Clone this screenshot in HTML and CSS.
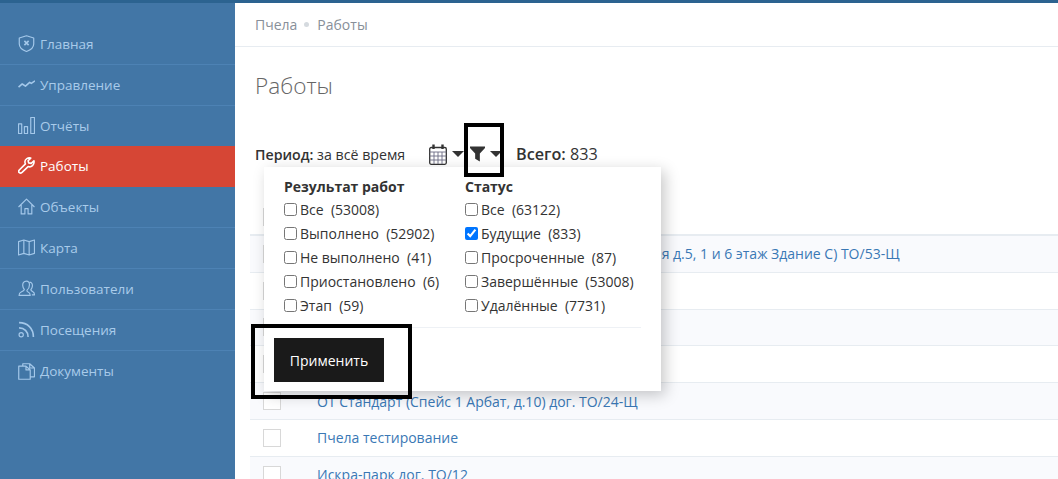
FILE: index.html
```html
<!DOCTYPE html>
<html lang="ru">
<head>
<meta charset="utf-8">
<title>Работы</title>
<link rel="stylesheet" href="styles.css">
</head>
<body>
<div class="topbar"></div>
<div class="app">
  <aside class="sidebar">
    <nav class="nav">
      <a class="nav-item"><svg class="nav-icon" viewBox="0 0 16 16"><path d="M8 .7 14.800 2.800V8.500C14.800 11.700 11.700 14.200 8 15.500 4.300 14.200 1.200 11.700 1.200 8.500V2.800Z"/><path class="thick" d="M6 5.500 10 9.500M10 5.500 6 9.500"/></svg><span>Главная</span></a>
      <a class="nav-item"><svg class="nav-icon" viewBox="0 0 16 16"><path class="thick" d="M.5 10.500 4 7.500 7 9.500 11 6 12.500 7 16 4.500"/></svg><span>Управление</span></a>
      <a class="nav-item"><svg class="nav-icon" viewBox="0 0 16 16"><path d="M.5 6.500H3.500V15.500H.5ZM6 9H9V15.500H6ZM12 .5H15.500V15.500H12Z"/></svg><span>Отчёты</span></a>
      <a class="nav-item active"><svg class="nav-icon" viewBox="0 0 16 16"><path class="thick" d="M15 3.500 12.500 6 10 5.500 9.500 3.500 12 1C9.500.3 6.500 1.800 6.500 4.500 6.500 5.300 6.700 6 7 6.500L1.200 12.200C.3 13.200.6 14.300 1.300 14.800 2.100 15.400 3 15.200 3.800 14.500L9.500 9C12.500 10 15.800 7.500 15 3.500Z"/></svg><span>Работы</span></a>
      <a class="nav-item"><svg class="nav-icon" viewBox="0 0 16 16"><path d="M.5 8.500 8 1 15.500 8.500M3 6.500V15H6.500V10H9.500V15H13V6.500"/></svg><span>Объекты</span></a>
      <a class="nav-item"><svg class="nav-icon" viewBox="0 0 16 16"><path d="M.5 2.500 5.500 1 10.500 2.500 15.500 1V13.500L10.500 15 5.500 13.500.5 15ZM5.500 1V13.500M10.500 2.500V15"/></svg><span>Карта</span></a>
      <a class="nav-item"><svg class="nav-icon" viewBox="0 0 16 16"><path d="M8 1C5.500 1 4.200 3 4.500 5.500 4.700 7.300 5.500 8.300 6 9 6 10 5 10.500 3 11.300 1.500 11.900 1 12.800 1 14.500H11.500C11.500 12.800 11 11.900 9.500 11.300 8 10.700 8.500 10 8.500 9.500 9.800 8.500 10.800 6.500 10.800 4.500 10.800 2.500 9.800 1 8 1ZM11 2C13 2.200 13.800 4 13.500 6 13.300 7.500 12.500 8.500 12 9.200 12.300 10 13 10.500 14 11 15 11.500 15.500 12.500 15.500 14H13"/></svg><span>Пользователи</span></a>
      <a class="nav-item"><svg class="nav-icon" viewBox="0 0 16 16"><circle cx="3" cy="13" r="2"/><path class="thick" d="M1 6.500C6 6.500 9.500 10 9.500 15M1 1.500C9 1.500 14.500 7 14.500 15"/></svg><span>Посещения</span></a>
      <a class="nav-item"><svg class="nav-icon" viewBox="0 0 16 16"><path d="M4.500 3V.7H11L15.500 4.700V13H11.500M.7 3H7.500L11.500 6.500V15.300H.7ZM7.500 3V6.500H11.500M11 .7V4.700H15.500"/></svg><span>Документы</span></a>
    </nav>
  </aside>
  <main class="content">
    <div class="crumbs"><span>Пчела</span><i class="crumb-dot"></i><span>Работы</span></div>
    <h1 class="title">Работы</h1>
    <div class="toolbar">
      <span class="period"><b>Период:</b> за всё время</span>
      <span class="tool tool-cal"><svg class="cal" viewBox="0 0 18 21"><rect x=".7" y="3.500" width="16.600" height="16.800" rx="1.500" class="cal-frame"/><path d="M.7 8H17.300M.7 12H17.300M.7 16H17.300M5 8V20M9 8V20M13 8V20" class="cal-grid"/><path d="M4.500 .5V5M13.500 .5V5" class="cal-pin"/></svg><i class="caret"></i></span>
      <span class="tool tool-filter"><svg class="funnel" viewBox="0 0 16 16"><path d="M0 0H16V1.500L10.500 7.500V16L5.500 13V7.500L0 1.500Z"/></svg><i class="caret"></i></span>
      <span class="total"><b>Всего:</b> 833</span>
    </div>
    <div class="table-head"><span class="box"></span></div>
    <ul class="rows">
      <li class="row alt"><span class="box"></span><a>Пчела (Дом, город Москва, улица Большая Садовая д.5, 1 и 6 этаж Здание С) ТО/53-Щ</a></li>
      <li class="row"><span class="box"></span></li>
      <li class="row alt"><span class="box"></span></li>
      <li class="row"><span class="box"></span></li>
      <li class="row alt"><span class="box"></span><a>ОТ Стандарт (Спейс 1 Арбат, д.10) дог. ТО/24-Щ</a></li>
      <li class="row"><span class="box"></span><a>Пчела тестирование</a></li>
      <li class="row alt"><span class="box"></span><a>Искра-парк дог. ТО/12</a></li>
    </ul>
  </main>
</div>

<div class="popup">
  <div class="popup-cols">
    <div class="popup-col col-a">
      <h4>Результат работ</h4>
      <label class="opt"><input type="checkbox"><span>Все&nbsp; (53008)</span></label>
      <label class="opt"><input type="checkbox"><span>Выполнено&nbsp; (52902)</span></label>
      <label class="opt"><input type="checkbox"><span>Не выполнено&nbsp; (41)</span></label>
      <label class="opt"><input type="checkbox"><span>Приостановлено&nbsp; (6)</span></label>
      <label class="opt"><input type="checkbox"><span>Этап&nbsp; (59)</span></label>
    </div>
    <div class="popup-col">
      <h4>Статус</h4>
      <label class="opt"><input type="checkbox"><span>Все&nbsp; (63122)</span></label>
      <label class="opt"><input type="checkbox" checked><span>Будущие&nbsp; (833)</span></label>
      <label class="opt"><input type="checkbox"><span>Просроченные&nbsp; (87)</span></label>
      <label class="opt"><input type="checkbox"><span>Завершённые&nbsp; (53008)</span></label>
      <label class="opt"><input type="checkbox"><span>Удалённые&nbsp; (7731)</span></label>
    </div>
  </div>
  <div class="popup-rule"></div>
  <button class="apply" type="button">Применить</button>
</div>
<div class="mark mark-filter"></div>
<div class="mark mark-apply"></div>
</body>
</html>
```
FILE: styles.css
```css
* { box-sizing: border-box; }
html, body { margin: 0; height: 479px; overflow: hidden; }
body { position: relative; background: #fff; font-family: "Open Sans", "Noto Sans", sans-serif; font-size: 14px; color: #4a4a4a; }
.topbar { height: 3px; background: #2c6390; }
.app { display: flex; height: 476px; }

.sidebar { width: 235px; flex: none; background: #4276a6; padding-top: 21px; }
.nav-item { display: flex; align-items: center; height: 41px; padding: 0 0 1px 18px; gap: 5px; color: #a9cbea; font-size: 13.5px; border-bottom: 1px solid #4d82b4; }
.nav-item:last-child { border-bottom: 0; }
.nav-item.active { background: #d64635; color: #fff; border-bottom-color: #d64635; margin-top: -1px; }
.nav-icon { width: 17px; height: 17px; flex: none; fill: none; stroke: #a4c8ea; stroke-width: 1.100; stroke-linejoin: round; }
.nav-icon .thick { stroke-width: 1.500; }
.active .nav-icon { stroke: #fff; }

.content { flex: 1; min-width: 0; }
.crumbs { display: flex; align-items: center; height: 44px; padding: 0 0 1px 20px; border-bottom: 1px solid #e7ecf1; color: #888f99; font-size: 14px; }
.crumb-dot { width: 5px; height: 5px; border-radius: 50%; background: #d5dadf; margin: 0 8px 0 7px; }
.title { margin: 0; height: 96px; padding: 22px 0 0 20px; font-size: 22.6px; font-weight: 300; line-height: 34px; color: #666; }
.toolbar { display: flex; align-items: center; height: 22px; padding-left: 20px; color: #333; font-size: 14px; }
.period { width: 174px; font-size: 14.2px; white-space: nowrap; }
.period b { font-weight: 600; }
.tool { display: flex; align-items: center; }
.tool-cal { width: 41px; gap: 5px; }
.tool-filter { width: 46px; gap: 5px; }
.cal { width: 18px; height: 21px; flex: none; }
.cal-frame { fill: #fff; stroke: #333; stroke-width: 1.300; }
.cal-grid { fill: none; stroke: #6b6b85; stroke-width: .9; }
.cal-pin { stroke: #333; stroke-width: 2.400; }
.funnel { width: 15px; height: 16px; fill: #333; flex: none; }
.caret { width: 0; height: 0; border: 6px solid transparent; border-top-color: #333; border-bottom-width: 0; flex: none; }
.total { font-size: 16.2px; }
.total b { font-weight: 600; }

.table-head { height: 69px; margin-left: 28px; padding-top: 43px; }
.rows { list-style: none; margin: 0 0 0 15px; padding: 0; border-top: 2px solid #e7ecf1; }
.row { display: flex; align-items: center; height: 36.800px; padding-left: 13px; border-bottom: 1px solid #e7ecf1; background: #fff; }
.row.alt { background: #f9fafd; }
.row a { color: #3a78b5; font-size: 14px; margin-left: 36px; white-space: nowrap; }
.box { display: block; width: 18px; height: 18px; border: 1px solid #d8d8d8; background: #fff; flex: none; }

.popup { position: absolute; left: 264px; top: 167px; width: 397px; height: 224px; background: #fff; box-shadow: 4px 4px 14px rgba(0,0,0,.22); padding: 11px 20px 0 20px; }
.popup-cols { display: flex; }
.col-a { width: 181px; }
.popup-col h4 { margin: 0 0 2px; font-size: 14px; font-weight: 700; line-height: 17px; color: #333; }
.opt { display: flex; align-items: center; height: 24px; font-size: 14px; color: #333; white-space: nowrap; }
.opt input { width: 13px; height: 13px; margin: 1px 3px 0 0; flex: none; }
.popup-rule { height: 1px; background: #eef1f5; margin-top: 10px; }
.apply { display: block; width: 110px; height: 44px; margin: 10px 0 0 -10px; border: 0; background: #1a1a1a; color: #fff; font: 14px "Open Sans", sans-serif; padding: 0; }

.mark { position: absolute; border: 4px solid #000; pointer-events: none; }
.mark-filter { left: 464px; top: 123px; width: 40px; height: 54px; }
.mark-apply { left: 251px; top: 324px; width: 161px; height: 75px; }
```
